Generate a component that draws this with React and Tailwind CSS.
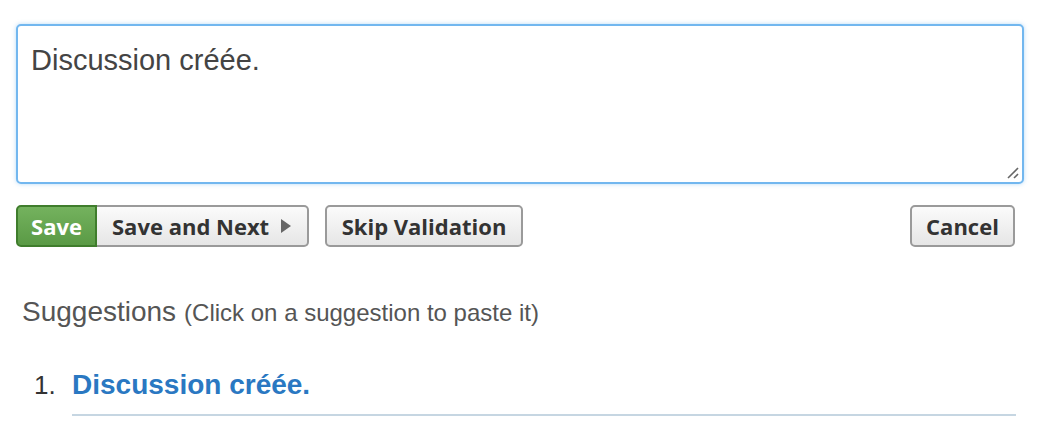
export default function App() {
  const btn = "h-[42px] flex items-center text-[22px] font-bold text-[#333] bg-gradient-to-b from-[#fbfbfb] to-[#e6e6e6] border-2 border-[#9a9a9a] rounded-[5px]";
  return (
    <div className="w-[1040px] h-[422px] bg-white pl-[16px] pt-[24px]" style={{ fontFamily: '"Liberation Sans", Arial, sans-serif' }}>
      <div className="relative w-[1008px] h-[160px] border-2 border-[#72b7ef] rounded-[5px] shadow-[0_0_4px_rgba(114,183,239,0.5)] bg-white">
        <div className="pl-[13px] pt-[17px] text-[29px] leading-[34px] text-[#444]">Discussion créée.</div>
        <svg className="absolute right-[2px] bottom-[2px]" width="14" height="14" viewBox="0 0 14 14">
          <line x1="2" y1="12" x2="12" y2="2" stroke="#666" strokeWidth="1.6" />
          <line x1="8" y1="12" x2="12" y2="8" stroke="#666" strokeWidth="1.6" />
        </svg>
      </div>
      <div className="flex items-center mt-[21px] w-[999px]" style={{ fontFamily: '"Open Sans", sans-serif' }}>
        <div className="flex">
          <button className="h-[42px] w-[81px] justify-center flex items-center text-[22px] font-bold text-white bg-gradient-to-b from-[#74b25e] to-[#5a9a45] border-2 border-[#3f7d2c] rounded-l-[5px]">Save</button>
          <button className={btn + " w-[212px] pl-[15px] rounded-l-none border-l-0"}>
            Save and Next
            <svg className="ml-[12px]" width="10" height="14" viewBox="0 0 10 14"><polygon points="0,0 10,7 0,14" fill="#666" /></svg>
          </button>
        </div>
        <button className={btn + " w-[198px] justify-center ml-[16px]"}>Skip Validation</button>
        <button className={btn + " w-[105px] justify-center ml-auto"}>Cancel</button>
      </div>
      <div className="mt-[48px] pl-[6px] text-[#555] flex items-baseline leading-[34px]">
        <span className="text-[28px]">Suggestions</span>
        <span className="text-[24px] ml-[8px]">(Click on a suggestion to paste it)</span>
      </div>
      <div className="mt-[38px] flex w-[1000px] leading-[34px]">
        <span className="w-[56px] pl-[18px] text-[26px] text-[#333]">1.</span>
        <div className="flex-1 border-b-2 border-[#c6d6e2] pb-[8px]">
          <span className="text-[28px] font-bold text-[#2a78c2]">Discussion créée.</span>
        </div>
      </div>
    </div>
  );
}
